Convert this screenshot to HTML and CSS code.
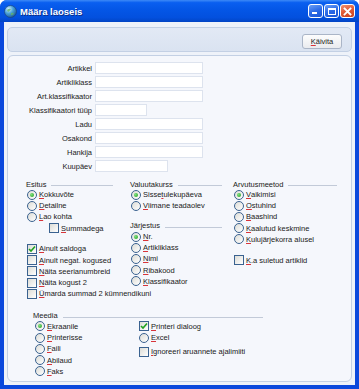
FILE: index.html
```html
<!DOCTYPE html>
<html lang="et">
<head>
    <meta charset="UTF-8">
    <title>Määra laoseis</title>
    <link rel="stylesheet" href="styles.css">
</head>
<body>
    <div class="window">
        <div class="titlebar">
            <svg class="app-icon" width="13" height="13" viewBox="0 0 13 13">
                <defs>
                    <radialGradient id="globe" cx="0.35" cy="0.3" r="0.8">
                        <stop offset="0" stop-color="#d8f0ff"/>
                        <stop offset="0.45" stop-color="#4aa3d8"/>
                        <stop offset="1" stop-color="#1a4f8a"/>
                    </radialGradient>
                </defs>
                <circle cx="6.5" cy="6.5" r="6" fill="url(#globe)" stroke="#1b3f77" stroke-width="0.6"/>
                <path d="M3 5 Q5 3 7 4 Q6 6 4 7 Z" fill="#5fb36a" opacity="0.8"/>
                <path d="M7 8 Q9 7 10 9 Q8 10.5 7 10 Z" fill="#5fb36a" opacity="0.8"/>
            </svg>
            <span class="title">Määra laoseis</span>
            <div class="win-buttons">
                <span class="win-btn"><span class="min-glyph"></span></span>
                <span class="win-btn"><span class="max-glyph"></span></span>
                <span class="win-btn close">
                    <svg width="9" height="9" viewBox="0 0 9 9"><path d="M1.5 1.5 L7.5 7.5 M7.5 1.5 L1.5 7.5" stroke="#fff" stroke-width="1.8" stroke-linecap="square"/></svg>
                </span>
            </div>
        </div>

        <div class="client">
            <div class="toolbar">
                <button class="run-btn"><u>K</u>äivita</button>
            </div>

            <div class="main-panel">
                <div class="fields">
                    <label>Artikkel</label><span class="input w-full"></span>
                    <label>Artikliklass</label><span class="input w-full"></span>
                    <label>Art.klassifikaator</label><span class="input w-full"></span>
                    <label>Klassifikaatori tüüp</label><span class="input w-short"></span>
                    <label>Ladu</label><span class="input w-full"></span>
                    <label>Osakond</label><span class="input w-full"></span>
                    <label>Hankija</label><span class="input w-full"></span>
                    <label>Kuupäev</label><span class="input w-mid"></span>
                </div>

                <div class="options">
                    <div class="col">
                        <div class="heading h-esitus">Esitus</div>
                        <div class="row"><span class="radio on"></span><u>K</u>okkuvõte</div>
                        <div class="row"><span class="radio"></span><u>D</u>etailne</div>
                        <div class="row"><span class="radio"></span><u>L</u>ao kohta</div>
                        <div class="row indent"><span class="check"></span><u>S</u>ummadega</div>

                        <div class="group-gap"></div>
                        <div class="row"><span class="check"><svg class="tick" viewBox="0 0 8 8"><path d="M1 4 L3 6 L7 1.5" /></svg></span><u>A</u>inult saldoga</div>
                        <div class="row"><span class="check"></span><u>A</u>inult negat. kogused</div>
                        <div class="row"><span class="check"></span><u>N</u>äita seerianumbreid</div>
                        <div class="row"><span class="check"></span><u>N</u>äita kogust 2</div>
                        <div class="row"><span class="check"></span><u>Ü</u>marda summad 2 kümnendikuni</div>
                    </div>

                    <div class="col">
                        <div class="heading h-valuuta">Valuutakurss</div>
                        <div class="row"><span class="radio on"></span>Sisse<u>t</u>ulekupäeva</div>
                        <div class="row"><span class="radio"></span><u>V</u>iimane teadaolev</div>

                        <div class="group-gap"></div>
                        <div class="heading h-valuuta">Järjestus</div>
                        <div class="row"><span class="radio on"></span><u>N</u>r.</div>
                        <div class="row"><span class="radio"></span><u>A</u>rtikliklass</div>
                        <div class="row"><span class="radio"></span><u>N</u>imi</div>
                        <div class="row"><span class="radio"></span><u>R</u>ibakood</div>
                        <div class="row"><span class="radio"></span><u>K</u>lassifikaator</div>
                    </div>

                    <div class="col">
                        <div class="heading h-arvutus">Arvutusmeetod</div>
                        <div class="row"><span class="radio on"></span><u>V</u>aikimisi</div>
                        <div class="row"><span class="radio"></span><u>O</u>stuhind</div>
                        <div class="row"><span class="radio"></span><u>B</u>aashind</div>
                        <div class="row"><span class="radio"></span><u>K</u>aalutud keskmine</div>
                        <div class="row"><span class="radio"></span><u>K</u>ulujärjekorra alusel</div>

                        <div class="group-gap"></div>
                        <div class="row"><span class="check"></span><u>K</u>.a suletud artiklid</div>
                    </div>
                </div>

                <div class="media">
                    <div class="heading h-meedia">Meedia</div>
                    <div class="media-cols">
                        <div class="col media-left">
                            <div class="row"><span class="radio on"></span><u>E</u>kraanile</div>
                            <div class="row"><span class="radio"></span><u>P</u>rinterisse</div>
                            <div class="row"><span class="radio"></span><u>F</u>aili</div>
                            <div class="row"><span class="radio"></span><u>A</u>bilaud</div>
                            <div class="row"><span class="radio"></span><u>F</u>aks</div>
                        </div>
                        <div class="col">
                            <div class="row"><span class="check"><svg class="tick" viewBox="0 0 8 8"><path d="M1 4 L3 6 L7 1.5" /></svg></span><u>P</u>rinteri dialoog</div>
                            <div class="row"><span class="radio"></span><u>E</u>xcel</div>
                            <div class="small-gap"></div>
                            <div class="row"><span class="check"></span><u>I</u>gnoreeri aruannete ajalimiiti</div>
                        </div>
                    </div>
                </div>
            </div>
        </div>
    </div>
</body>
</html>
```

FILE: styles.css
```css
:root {
    --frame-blue: #0a48dc;
    --panel-border: #c3d0e4;
    --text-color: #1a1a1a;
    --mnemonic: #d8343a;
    --control-border: #3a6290;
}

*, *::before, *::after {
    box-sizing: border-box;
}

body {
    margin: 0;
    background: #ffffff;
    font-family: "Liberation Sans", Arial, sans-serif;
    font-size: 7.5px;
    color: var(--text-color);
}

.window {
    width: 359px;
    height: 389px;
    display: flex;
    flex-direction: column;
    border-radius: 7px 7px 0 0;
    overflow: hidden;
    background: var(--frame-blue);
}

/* ----- Title bar ----- */
.titlebar {
    height: 22px;
    flex: none;
    display: flex;
    align-items: center;
    padding: 0 4px 0 4px;
    background: linear-gradient(180deg, #3d8af7 0%, #0a5ff0 12%, #0456e6 45%, #0350de 80%, #0244c4 100%);
}

.app-icon {
    flex: none;
    margin-top: 1px;
}

.title {
    margin-left: 3px;
    margin-top: 1px;
    font-size: 9.5px;
    font-weight: 700;
    color: #ffffff;
    text-shadow: 1px 1px 0 #0b2f8a;
    flex: 1;
}

.win-buttons {
    display: flex;
    gap: 1px;
}

.win-btn {
    width: 15px;
    height: 14px;
    border: 1px solid #ffffff;
    border-radius: 3px;
    background: linear-gradient(160deg, #6a9ef6 0%, #2c6ae6 50%, #1a55d6 100%);
    display: flex;
    align-items: center;
    justify-content: center;
    position: relative;
}

.win-btn.close {
    background: linear-gradient(160deg, #f29070 0%, #e05a36 50%, #c7401e 100%);
}

.min-glyph {
    position: absolute;
    left: 3px;
    bottom: 3px;
    width: 5px;
    height: 2px;
    background: #ffffff;
}

.max-glyph {
    width: 8px;
    height: 7px;
    border: 1px solid #ffffff;
    border-top-width: 2px;
}

/* ----- Client area ----- */
.client {
    flex: 1;
    margin: 0 4px 4px 4px;
    background: #eef2f9;
    padding: 5px 3px 3px 3px;
    display: flex;
    flex-direction: column;
    gap: 3px;
}

.toolbar {
    height: 25px;
    flex: none;
    border: 1px solid var(--panel-border);
    border-radius: 5px;
    background: linear-gradient(180deg, #e2e9f5, #dae3f1);
    display: flex;
    justify-content: flex-end;
    align-items: center;
    padding-right: 9px;
}

.run-btn {
    width: 40px;
    height: 15px;
    margin-top: 3px;
    padding: 0;
    font-family: inherit;
    font-size: 7.5px;
    color: var(--text-color);
    border: 1px solid #aab5c7;
    border-radius: 3px;
    background: linear-gradient(180deg, #fdfdfd, #e9ebef);
}

u {
    text-decoration: underline;
    text-decoration-color: var(--mnemonic);
    text-underline-offset: 1px;
}

.main-panel {
    flex: 1;
    border: 1px solid var(--panel-border);
    border-radius: 6px;
    background: #f5f7fc;
    padding: 6px 0 3px 0;
}

/* ----- Fields ----- */
.fields {
    display: grid;
    grid-template-columns: 84px auto;
    column-gap: 3px;
    row-gap: 2px;
    align-items: center;
}

.fields label {
    text-align: right;
    white-space: nowrap;
}

.input {
    height: 12px;
    background: #ffffff;
    border: 1px solid #dde3ee;
}

.w-full { width: 108px; }
.w-short { width: 52px; }
.w-mid { width: 73px; }

/* ----- Option groups ----- */
.options {
    display: grid;
    grid-template-columns: 104px 103px auto;
    margin: 7px 0 0 18px;
}

.heading {
    height: 10px;
    display: flex;
    align-items: center;
    white-space: nowrap;
}

.heading::after {
    content: "";
    flex: 1;
    height: 1px;
    margin: 3px 0 0 5px;
    background: #c2cad8;
}

.h-esitus { width: 87px; }
.h-valuuta { width: 92px; }
.h-arvutus { width: 104px; }
.h-meedia { width: 230px; }

.row {
    height: 11.2px;
    display: flex;
    align-items: center;
    white-space: nowrap;
    padding-left: 1px;
}

.row.indent {
    padding-left: 23px;
}

.group-gap {
    height: 9.6px;
}

.small-gap {
    height: 3px;
}

.radio, .check {
    flex: none;
    width: 10px;
    height: 10px;
    margin-right: 2px;
    border: 1px solid var(--control-border);
    background: linear-gradient(135deg, #dcdcd6, #ffffff);
    position: relative;
    display: flex;
    align-items: center;
    justify-content: center;
}

.radio {
    border-radius: 50%;
}

.radio.on::after {
    content: "";
    width: 4px;
    height: 4px;
    border-radius: 50%;
    background: radial-gradient(circle at 35% 35%, #7ee07e, #1f9d1f);
}

.tick {
    width: 8px;
    height: 8px;
}

.tick path {
    fill: none;
    stroke: #21a121;
    stroke-width: 1.6;
}

/* ----- Media ----- */
.media {
    margin: 11.6px 0 0 25px;
}

.media-cols {
    display: flex;
}

.media-left {
    width: 105px;
}

.media-left .row {
    padding-left: 2px;
}
```
